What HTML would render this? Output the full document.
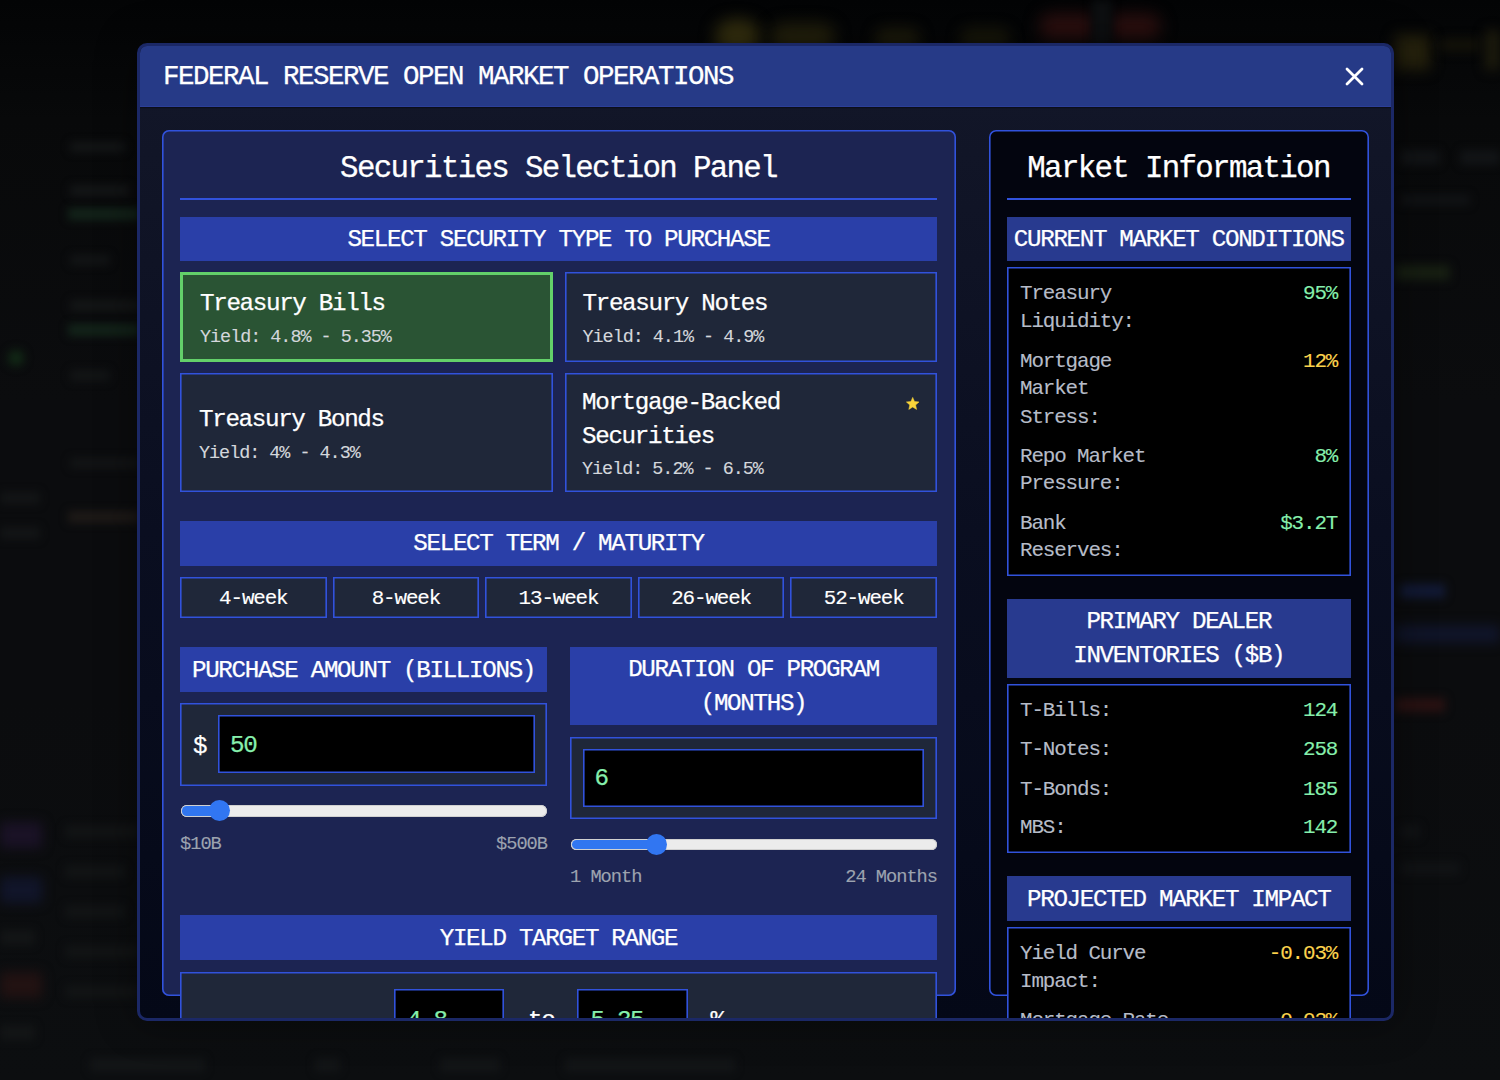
<!DOCTYPE html>
<html><head><meta charset="utf-8"><style>
html,body{margin:0;padding:0;width:1500px;height:1080px;overflow:hidden;background:#0a0c0e;}
body{position:relative;font-family:'Liberation Mono', monospace;}
.a{position:absolute;box-sizing:content-box;}
.t{position:absolute;white-space:pre;font-family:'Liberation Mono', monospace;-webkit-text-stroke:0.25px currentColor;}
#bg{position:absolute;left:0;top:0;width:1500px;height:1080px;background:linear-gradient(180deg,#030405 0px,#08090a 120px,#0b0c0e 400px,#0b0c0e 700px,#0c0e10 1080px);}
#modal{position:absolute;left:137px;top:43px;width:1251px;height:972px;border:3px solid #1b2866;border-radius:10px;overflow:hidden;box-shadow:0 0 40px rgba(0,0,0,0.45);background:linear-gradient(180deg,#131729 0%,#0a0e20 50%,#040817 100%);}
#hdr{position:absolute;left:0;top:0;width:1251px;height:60px;background:#263a87;border-bottom:1px solid #2d3f98;box-shadow:0 1px 1px rgba(0,0,0,0.35);}
</style></head><body>
<div id="bg"><div class="a" style="left:68px;top:208px;width:72px;height:12px;background:#13241a;filter:blur(4px);border-radius:2px"></div>
<div class="a" style="left:68px;top:324px;width:72px;height:12px;background:#13241a;filter:blur(4px);border-radius:2px"></div>
<div class="a" style="left:8px;top:350px;width:16px;height:16px;background:#122a16;filter:blur(5px);border-radius:8px"></div>
<div class="a" style="left:68px;top:511px;width:72px;height:12px;background:#1e1a17;filter:blur(4px);border-radius:2px"></div>
<div class="a" style="left:70px;top:142px;width:55px;height:10px;background:#141617;filter:blur(4px);border-radius:2px"></div>
<div class="a" style="left:70px;top:185px;width:60px;height:11px;background:#141617;filter:blur(4px);border-radius:2px"></div>
<div class="a" style="left:70px;top:255px;width:40px;height:10px;background:#131516;filter:blur(4px);border-radius:2px"></div>
<div class="a" style="left:70px;top:300px;width:70px;height:11px;background:#141617;filter:blur(4px);border-radius:2px"></div>
<div class="a" style="left:70px;top:370px;width:40px;height:11px;background:#131516;filter:blur(4px);border-radius:2px"></div>
<div class="a" style="left:70px;top:458px;width:70px;height:10px;background:#131516;filter:blur(4px);border-radius:2px"></div>
<div class="a" style="left:0px;top:492px;width:40px;height:12px;background:#131516;filter:blur(4px);border-radius:2px"></div>
<div class="a" style="left:0px;top:527px;width:40px;height:12px;background:#131516;filter:blur(4px);border-radius:2px"></div>
<div class="a" style="left:0px;top:822px;width:42px;height:26px;background:#1a1226;filter:blur(6px);border-radius:2px"></div>
<div class="a" style="left:0px;top:877px;width:42px;height:26px;background:#11152a;filter:blur(6px);border-radius:2px"></div>
<div class="a" style="left:0px;top:972px;width:42px;height:26px;background:#221212;filter:blur(6px);border-radius:2px"></div>
<div class="a" style="left:0px;top:930px;width:35px;height:15px;background:#131516;filter:blur(4px);border-radius:2px"></div>
<div class="a" style="left:0px;top:1025px;width:35px;height:15px;background:#131516;filter:blur(4px);border-radius:2px"></div>
<div class="a" style="left:65px;top:825px;width:75px;height:13px;background:#121415;filter:blur(4px);border-radius:2px"></div>
<div class="a" style="left:65px;top:865px;width:60px;height:13px;background:#121415;filter:blur(4px);border-radius:2px"></div>
<div class="a" style="left:65px;top:905px;width:60px;height:13px;background:#121415;filter:blur(4px);border-radius:2px"></div>
<div class="a" style="left:65px;top:945px;width:75px;height:13px;background:#121415;filter:blur(4px);border-radius:2px"></div>
<div class="a" style="left:65px;top:985px;width:75px;height:13px;background:#121415;filter:blur(4px);border-radius:2px"></div>
<div class="a" style="left:90px;top:1058px;width:115px;height:14px;background:#131517;filter:blur(4px);border-radius:2px"></div>
<div class="a" style="left:315px;top:1058px;width:25px;height:14px;background:#131517;filter:blur(4px);border-radius:2px"></div>
<div class="a" style="left:440px;top:1058px;width:60px;height:14px;background:#131517;filter:blur(4px);border-radius:2px"></div>
<div class="a" style="left:565px;top:1058px;width:170px;height:14px;background:#131517;filter:blur(4px);border-radius:2px"></div>
<div class="a" style="left:1400px;top:584px;width:45px;height:14px;background:#121a36;filter:blur(5px);border-radius:2px"></div>
<div class="a" style="left:1395px;top:625px;width:105px;height:18px;background:#10152a;filter:blur(6px);border-radius:2px"></div>
<div class="a" style="left:1395px;top:698px;width:50px;height:14px;background:#2a1212;filter:blur(5px);border-radius:2px"></div>
<div class="a" style="left:1395px;top:265px;width:55px;height:15px;background:#171f12;filter:blur(5px);border-radius:2px"></div>
<div class="a" style="left:1400px;top:150px;width:40px;height:15px;background:#121416;filter:blur(4px);border-radius:2px"></div>
<div class="a" style="left:1460px;top:150px;width:40px;height:15px;background:#121416;filter:blur(4px);border-radius:2px"></div>
<div class="a" style="left:1400px;top:195px;width:70px;height:10px;background:#111315;filter:blur(4px);border-radius:2px"></div>
<div class="a" style="left:1400px;top:825px;width:20px;height:13px;background:#111315;filter:blur(4px);border-radius:2px"></div>
<div class="a" style="left:1400px;top:862px;width:60px;height:13px;background:#111315;filter:blur(4px);border-radius:2px"></div>
<div class="a" style="left:715px;top:20px;width:45px;height:36px;background:#35300f;filter:blur(8px);border-radius:20px"></div>
<div class="a" style="left:770px;top:24px;width:65px;height:28px;background:#24210c;filter:blur(8px);border-radius:14px"></div>
<div class="a" style="left:875px;top:28px;width:45px;height:22px;background:#1c1a0b;filter:blur(7px);border-radius:10px"></div>
<div class="a" style="left:960px;top:28px;width:50px;height:22px;background:#18170a;filter:blur(7px);border-radius:10px"></div>
<div class="a" style="left:1040px;top:14px;width:55px;height:26px;background:#2c0f0f;filter:blur(8px);border-radius:10px"></div>
<div class="a" style="left:1110px;top:14px;width:50px;height:26px;background:#2c0f0f;filter:blur(8px);border-radius:10px"></div>
<div class="a" style="left:1092px;top:0px;width:20px;height:45px;background:#0d0f11;filter:blur(4px);border-radius:0px"></div>
<div class="a" style="left:1395px;top:35px;width:35px;height:35px;background:#24200c;filter:blur(7px);border-radius:2px"></div>
<div class="a" style="left:1440px;top:40px;width:40px;height:10px;background:#171509;filter:blur(6px);border-radius:2px"></div>
<div class="a" style="left:1485px;top:30px;width:15px;height:40px;background:#1c1a0c;filter:blur(6px);border-radius:2px"></div></div>
<div id="modal"><div id="hdr"></div>
<div class="t" style="top:13.28px;font-size:27.5px;line-height:35px;color:#fff;letter-spacing:-1.5px;left:23px;">FEDERAL RESERVE OPEN MARKET OPERATIONS</div>
<svg class="a" style="left:1204.8px;top:20.8px" width="19" height="19" viewBox="0 0 19 19"><path d="M2 2L17 17M17 2L2 17" stroke="#fff" stroke-width="2.8" stroke-linecap="round"/></svg>
<div class="a" style="left:22px;top:84px;width:793.6px;height:866px;background:#1c2452;box-shadow:inset 0 0 0 1.6px #3152dc;border-radius:7px;"></div>
<div class="t" style="top:103px;font-size:30.8px;line-height:39px;color:#fff;letter-spacing:-1.68px;left:68.5px;width:700px;text-align:center;">Securities Selection Panel</div>
<div class="a" style="left:40px;top:151.5px;width:757px;height:2px;background:#3152dc;"></div>
<div class="a" style="left:40px;top:170.5px;width:757px;height:44.5px;background:#2a3fa8;"></div>
<div class="t" style="top:178.16px;font-size:24.2px;line-height:31px;color:#fff;letter-spacing:-1.32px;left:68.5px;width:700px;text-align:center;">SELECT SECURITY TYPE TO PURCHASE</div>
<div class="a" style="left:40px;top:226px;width:373px;height:90px;background:#2a5434;box-shadow:inset 0 0 0 3px #63d06a;"></div>
<div class="t" style="top:241.96px;font-size:24.2px;line-height:31px;color:#fff;letter-spacing:-1.32px;left:60px;">Treasury Bills</div>
<div class="t" style="top:279.7px;font-size:18.43px;line-height:23px;color:#d4d7dc;letter-spacing:-1.01px;-webkit-text-stroke-width:0.12px;left:60px;">Yield: 4.8% - 5.35%</div>
<div class="a" style="left:425px;top:226px;width:372px;height:90px;background:#1f2739;box-shadow:inset 0 0 0 1.6px #3152dc;"></div>
<div class="t" style="top:241.96px;font-size:24.2px;line-height:31px;color:#fff;letter-spacing:-1.32px;left:442.5px;">Treasury Notes</div>
<div class="t" style="top:279.7px;font-size:18.43px;line-height:23px;color:#d4d7dc;letter-spacing:-1.01px;-webkit-text-stroke-width:0.12px;left:442.5px;">Yield: 4.1% - 4.9%</div>
<div class="a" style="left:40px;top:327px;width:373px;height:119px;background:#1f2739;box-shadow:inset 0 0 0 1.6px #3152dc;"></div>
<div class="t" style="top:358.46px;font-size:24.2px;line-height:31px;color:#fff;letter-spacing:-1.32px;left:59px;">Treasury Bonds</div>
<div class="t" style="top:396.3px;font-size:18.43px;line-height:23px;color:#d4d7dc;letter-spacing:-1.01px;-webkit-text-stroke-width:0.12px;left:59px;">Yield: 4% - 4.3%</div>
<div class="a" style="left:425px;top:327px;width:372px;height:119px;background:#1f2739;box-shadow:inset 0 0 0 1.6px #3152dc;"></div>
<div class="t" style="top:341.26px;font-size:24.2px;line-height:31px;color:#fff;letter-spacing:-1.32px;left:442px;">Mortgage-Backed</div>
<div class="t" style="top:374.76px;font-size:24.2px;line-height:31px;color:#fff;letter-spacing:-1.32px;left:442px;">Securities</div>
<div class="t" style="top:412.3px;font-size:18.43px;line-height:23px;color:#d4d7dc;letter-spacing:-1.01px;-webkit-text-stroke-width:0.12px;left:442px;">Yield: 5.2% - 6.5%</div>
<svg class="a" style="left:765.6px;top:351.2px" width="13.4" height="12.5" viewBox="0 0 24 23"><path d="M12.00 0.70L15.29 8.37L23.60 9.13L17.33 14.63L19.17 22.77L12.00 18.50L4.83 22.77L6.67 14.63L0.40 9.13L8.71 8.37Z" fill="#f9d43a" stroke="#f9d43a" stroke-width="1" stroke-linejoin="round"/></svg>
<div class="a" style="left:40px;top:475px;width:757px;height:44.5px;background:#2a3fa8;"></div>
<div class="t" style="top:482.46px;font-size:24.2px;line-height:31px;color:#fff;letter-spacing:-1.32px;left:68.5px;width:700px;text-align:center;">SELECT TERM / MATURITY</div>
<div class="a" style="left:40px;top:531.3px;width:146.6px;height:41.2px;background:#1f2739;box-shadow:inset 0 0 0 1.6px #3152dc;"></div>
<div class="t" style="top:538.94px;font-size:20.9px;line-height:27px;color:#fff;letter-spacing:-1.14px;-webkit-text-stroke-width:0.12px;left:40px;width:146.6px;text-align:center;">4-week</div>
<div class="a" style="left:192.6px;top:531.3px;width:146.6px;height:41.2px;background:#1f2739;box-shadow:inset 0 0 0 1.6px #3152dc;"></div>
<div class="t" style="top:538.94px;font-size:20.9px;line-height:27px;color:#fff;letter-spacing:-1.14px;-webkit-text-stroke-width:0.12px;left:192.6px;width:146.6px;text-align:center;">8-week</div>
<div class="a" style="left:345.2px;top:531.3px;width:146.6px;height:41.2px;background:#1f2739;box-shadow:inset 0 0 0 1.6px #3152dc;"></div>
<div class="t" style="top:538.94px;font-size:20.9px;line-height:27px;color:#fff;letter-spacing:-1.14px;-webkit-text-stroke-width:0.12px;left:345.2px;width:146.6px;text-align:center;">13-week</div>
<div class="a" style="left:497.8px;top:531.3px;width:146.6px;height:41.2px;background:#1f2739;box-shadow:inset 0 0 0 1.6px #3152dc;"></div>
<div class="t" style="top:538.94px;font-size:20.9px;line-height:27px;color:#fff;letter-spacing:-1.14px;-webkit-text-stroke-width:0.12px;left:497.8px;width:146.6px;text-align:center;">26-week</div>
<div class="a" style="left:650.4px;top:531.3px;width:146.6px;height:41.2px;background:#1f2739;box-shadow:inset 0 0 0 1.6px #3152dc;"></div>
<div class="t" style="top:538.94px;font-size:20.9px;line-height:27px;color:#fff;letter-spacing:-1.14px;-webkit-text-stroke-width:0.12px;left:650.4px;width:146.6px;text-align:center;">52-week</div>
<div class="a" style="left:40px;top:601px;width:367px;height:44.5px;background:#2a3fa8;"></div>
<div class="t" style="top:608.56px;font-size:24.2px;line-height:31px;color:#fff;letter-spacing:-1.32px;left:40px;width:367px;text-align:center;">PURCHASE AMOUNT (BILLIONS)</div>
<div class="a" style="left:40px;top:657px;width:367px;height:83px;background:#1f2739;box-shadow:inset 0 0 0 1.6px #3152dc;"></div>
<div class="t" style="top:685.26px;font-size:24.2px;line-height:31px;color:#fff;letter-spacing:-1.32px;left:53px;">$</div>
<div class="a" style="left:77.5px;top:669.3px;width:317.5px;height:58.2px;background:#000;box-shadow:inset 0 0 0 1.6px #3152dc;"></div>
<div class="t" style="top:683.96px;font-size:24.2px;line-height:31px;color:#86efac;letter-spacing:-1.32px;left:90px;">50</div>
<div class="a" style="left:40.5px;top:759.2px;width:366.5px;height:11.6px;background:#ececec;border-radius:5.8px;box-shadow:inset 0 0 0 1px #d0d0d0;"></div>
<div class="a" style="left:41.5px;top:760.4px;width:37.73px;height:9.2px;background:#3176f0;border-radius:4.6px;"></div>
<div class="a" style="left:68.63px;top:754.1px;width:21.2px;height:21.2px;background:#3176f2;border-radius:10.6px;"></div>
<div class="t" style="top:785.72px;font-size:18.7px;line-height:24px;color:#9ca3af;letter-spacing:-1.02px;-webkit-text-stroke-width:0.12px;left:40px;">$10B</div>
<div class="t" style="top:785.72px;font-size:18.7px;line-height:24px;color:#9ca3af;letter-spacing:-1.02px;-webkit-text-stroke-width:0.12px;left:207px;width:200px;text-align:right;">$500B</div>
<div class="a" style="left:430px;top:601px;width:367px;height:78px;background:#2a3fa8;"></div>
<div class="t" style="top:607.76px;font-size:24.2px;line-height:31px;color:#fff;letter-spacing:-1.32px;left:430px;width:367px;text-align:center;">DURATION OF PROGRAM</div>
<div class="t" style="top:641.96px;font-size:24.2px;line-height:31px;color:#fff;letter-spacing:-1.32px;left:430px;width:367px;text-align:center;">(MONTHS)</div>
<div class="a" style="left:430px;top:691px;width:367px;height:82.2px;background:#1f2739;box-shadow:inset 0 0 0 1.6px #3152dc;"></div>
<div class="a" style="left:442.7px;top:703px;width:341.8px;height:58.2px;background:#000;box-shadow:inset 0 0 0 1.6px #3152dc;"></div>
<div class="t" style="top:717.16px;font-size:24.2px;line-height:31px;color:#86efac;letter-spacing:-1.32px;left:454.5px;">6</div>
<div class="a" style="left:430.5px;top:792.7px;width:366.5px;height:11.6px;background:#ececec;border-radius:5.8px;box-shadow:inset 0 0 0 1px #d0d0d0;"></div>
<div class="a" style="left:431.5px;top:793.9px;width:84.67px;height:9.2px;background:#3176f0;border-radius:4.6px;"></div>
<div class="a" style="left:505.57px;top:787.6px;width:21.2px;height:21.2px;background:#3176f2;border-radius:10.6px;"></div>
<div class="t" style="top:818.92px;font-size:18.7px;line-height:24px;color:#9ca3af;letter-spacing:-1.02px;-webkit-text-stroke-width:0.12px;left:430px;">1 Month</div>
<div class="t" style="top:818.92px;font-size:18.7px;line-height:24px;color:#9ca3af;letter-spacing:-1.02px;-webkit-text-stroke-width:0.12px;left:597px;width:200px;text-align:right;">24 Months</div>
<div class="a" style="left:40px;top:869px;width:757px;height:44.5px;background:#2a3fa8;"></div>
<div class="t" style="top:876.96px;font-size:24.2px;line-height:31px;color:#fff;letter-spacing:-1.32px;left:68.5px;width:700px;text-align:center;">YIELD TARGET RANGE</div>
<div class="a" style="left:40px;top:925.5px;width:757px;height:128.5px;background:#1f2739;box-shadow:inset 0 0 0 1.6px #3152dc;"></div>
<div class="a" style="left:253.5px;top:943.3px;width:110.5px;height:70.7px;background:#000;box-shadow:inset 0 0 0 1.6px #3152dc;"></div>
<div class="t" style="top:959.26px;font-size:24.2px;line-height:31px;color:#86efac;letter-spacing:-1.32px;left:267px;">4.8</div>
<div class="t" style="top:959.26px;font-size:24.2px;line-height:31px;color:#fff;letter-spacing:-1.32px;left:388px;">to</div>
<div class="a" style="left:437.2px;top:943.3px;width:110.8px;height:70.7px;background:#000;box-shadow:inset 0 0 0 1.6px #3152dc;"></div>
<div class="t" style="top:959.26px;font-size:24.2px;line-height:31px;color:#86efac;letter-spacing:-1.32px;left:450.5px;">5.35</div>
<div class="t" style="top:959.26px;font-size:24.2px;line-height:31px;color:#fff;letter-spacing:-1.32px;left:570.5px;">%</div>
<div class="a" style="left:849px;top:84px;width:380px;height:866px;background:#03050f;box-shadow:inset 0 0 0 1.6px #3152dc;border-radius:7px;"></div>
<div class="t" style="top:103px;font-size:30.8px;line-height:39px;color:#fff;letter-spacing:-1.68px;left:838.5px;width:400px;text-align:center;">Market Information</div>
<div class="a" style="left:867px;top:152px;width:343.5px;height:2px;background:#3152dc;"></div>
<div class="a" style="left:867px;top:170.5px;width:343.5px;height:44.5px;background:#283a8f;"></div>
<div class="t" style="top:177.66px;font-size:24.2px;line-height:31px;color:#fff;letter-spacing:-1.32px;left:838.75px;width:400px;text-align:center;">CURRENT MARKET CONDITIONS</div>
<div class="a" style="left:867px;top:221.2px;width:343.5px;height:309.3px;background:#000;box-shadow:inset 0 0 0 1.6px #3152dc;"></div>
<div class="a" style="left:867px;top:221.2px;width:343.5px;height:309.3px;background:#000;box-shadow:inset 0 0 0 1.6px #3152dc;"></div>
<div class="t" style="top:234.14px;font-size:20.9px;line-height:27px;color:#b6bcc8;letter-spacing:-1.14px;-webkit-text-stroke-width:0.12px;left:880px;">Treasury</div>
<div class="t" style="top:261.94px;font-size:20.9px;line-height:27px;color:#b6bcc8;letter-spacing:-1.14px;-webkit-text-stroke-width:0.12px;left:880px;">Liquidity:</div>
<div class="t" style="top:234.14px;font-size:20.9px;line-height:27px;color:#86efac;letter-spacing:-1.14px;-webkit-text-stroke-width:0.12px;left:1047.2px;width:150px;text-align:right;">95%</div>
<div class="t" style="top:301.74px;font-size:20.9px;line-height:27px;color:#b6bcc8;letter-spacing:-1.14px;-webkit-text-stroke-width:0.12px;left:880px;">Mortgage</div>
<div class="t" style="top:329.44px;font-size:20.9px;line-height:27px;color:#b6bcc8;letter-spacing:-1.14px;-webkit-text-stroke-width:0.12px;left:880px;">Market</div>
<div class="t" style="top:357.64px;font-size:20.9px;line-height:27px;color:#b6bcc8;letter-spacing:-1.14px;-webkit-text-stroke-width:0.12px;left:880px;">Stress:</div>
<div class="t" style="top:301.74px;font-size:20.9px;line-height:27px;color:#fcd34d;letter-spacing:-1.14px;-webkit-text-stroke-width:0.12px;left:1047.2px;width:150px;text-align:right;">12%</div>
<div class="t" style="top:396.94px;font-size:20.9px;line-height:27px;color:#b6bcc8;letter-spacing:-1.14px;-webkit-text-stroke-width:0.12px;left:880px;">Repo Market</div>
<div class="t" style="top:424.34px;font-size:20.9px;line-height:27px;color:#b6bcc8;letter-spacing:-1.14px;-webkit-text-stroke-width:0.12px;left:880px;">Pressure:</div>
<div class="t" style="top:396.94px;font-size:20.9px;line-height:27px;color:#86efac;letter-spacing:-1.14px;-webkit-text-stroke-width:0.12px;left:1047.2px;width:150px;text-align:right;">8%</div>
<div class="t" style="top:463.54px;font-size:20.9px;line-height:27px;color:#b6bcc8;letter-spacing:-1.14px;-webkit-text-stroke-width:0.12px;left:880px;">Bank</div>
<div class="t" style="top:491.24px;font-size:20.9px;line-height:27px;color:#b6bcc8;letter-spacing:-1.14px;-webkit-text-stroke-width:0.12px;left:880px;">Reserves:</div>
<div class="t" style="top:463.54px;font-size:20.9px;line-height:27px;color:#86efac;letter-spacing:-1.14px;-webkit-text-stroke-width:0.12px;left:1047.2px;width:150px;text-align:right;">$3.2T</div>
<div class="a" style="left:867px;top:553px;width:343.5px;height:79px;background:#283a8f;"></div>
<div class="t" style="top:560.46px;font-size:24.2px;line-height:31px;color:#fff;letter-spacing:-1.32px;left:838.75px;width:400px;text-align:center;">PRIMARY DEALER</div>
<div class="t" style="top:594.16px;font-size:24.2px;line-height:31px;color:#fff;letter-spacing:-1.32px;left:838.75px;width:400px;text-align:center;">INVENTORIES ($B)</div>
<div class="a" style="left:867px;top:637.7px;width:343.5px;height:169.3px;background:#000;box-shadow:inset 0 0 0 1.6px #3152dc;"></div>
<div class="t" style="top:651.04px;font-size:20.9px;line-height:27px;color:#b6bcc8;letter-spacing:-1.14px;-webkit-text-stroke-width:0.12px;left:880px;">T-Bills:</div>
<div class="t" style="top:651.04px;font-size:20.9px;line-height:27px;color:#86efac;letter-spacing:-1.14px;-webkit-text-stroke-width:0.12px;left:1047.2px;width:150px;text-align:right;">124</div>
<div class="t" style="top:690.44px;font-size:20.9px;line-height:27px;color:#b6bcc8;letter-spacing:-1.14px;-webkit-text-stroke-width:0.12px;left:880px;">T-Notes:</div>
<div class="t" style="top:690.44px;font-size:20.9px;line-height:27px;color:#86efac;letter-spacing:-1.14px;-webkit-text-stroke-width:0.12px;left:1047.2px;width:150px;text-align:right;">258</div>
<div class="t" style="top:729.54px;font-size:20.9px;line-height:27px;color:#b6bcc8;letter-spacing:-1.14px;-webkit-text-stroke-width:0.12px;left:880px;">T-Bonds:</div>
<div class="t" style="top:729.54px;font-size:20.9px;line-height:27px;color:#86efac;letter-spacing:-1.14px;-webkit-text-stroke-width:0.12px;left:1047.2px;width:150px;text-align:right;">185</div>
<div class="t" style="top:768.14px;font-size:20.9px;line-height:27px;color:#b6bcc8;letter-spacing:-1.14px;-webkit-text-stroke-width:0.12px;left:880px;">MBS:</div>
<div class="t" style="top:768.14px;font-size:20.9px;line-height:27px;color:#86efac;letter-spacing:-1.14px;-webkit-text-stroke-width:0.12px;left:1047.2px;width:150px;text-align:right;">142</div>
<div class="a" style="left:867px;top:830px;width:343.5px;height:45px;background:#283a8f;"></div>
<div class="t" style="top:837.76px;font-size:24.2px;line-height:31px;color:#fff;letter-spacing:-1.32px;left:838.75px;width:400px;text-align:center;">PROJECTED MARKET IMPACT</div>
<div class="a" style="left:867px;top:881.3px;width:343.5px;height:272.7px;background:#000;box-shadow:inset 0 0 0 1.6px #3152dc;"></div>
<div class="t" style="top:894.24px;font-size:20.9px;line-height:27px;color:#b6bcc8;letter-spacing:-1.14px;-webkit-text-stroke-width:0.12px;left:880px;">Yield Curve</div>
<div class="t" style="top:922.24px;font-size:20.9px;line-height:27px;color:#b6bcc8;letter-spacing:-1.14px;-webkit-text-stroke-width:0.12px;left:880px;">Impact:</div>
<div class="t" style="top:894.24px;font-size:20.9px;line-height:27px;color:#fcd34d;letter-spacing:-1.14px;-webkit-text-stroke-width:0.12px;left:1047.2px;width:150px;text-align:right;">-0.03%</div>
<div class="t" style="top:961.44px;font-size:20.9px;line-height:27px;color:#b6bcc8;letter-spacing:-1.14px;-webkit-text-stroke-width:0.12px;left:880px;">Mortgage Rate</div>
<div class="t" style="top:989.44px;font-size:20.9px;line-height:27px;color:#b6bcc8;letter-spacing:-1.14px;-webkit-text-stroke-width:0.12px;left:880px;">Impact:</div>
<div class="t" style="top:961.44px;font-size:20.9px;line-height:27px;color:#fcd34d;letter-spacing:-1.14px;-webkit-text-stroke-width:0.12px;left:1047.2px;width:150px;text-align:right;">-0.02%</div>
</div>
</body></html>
